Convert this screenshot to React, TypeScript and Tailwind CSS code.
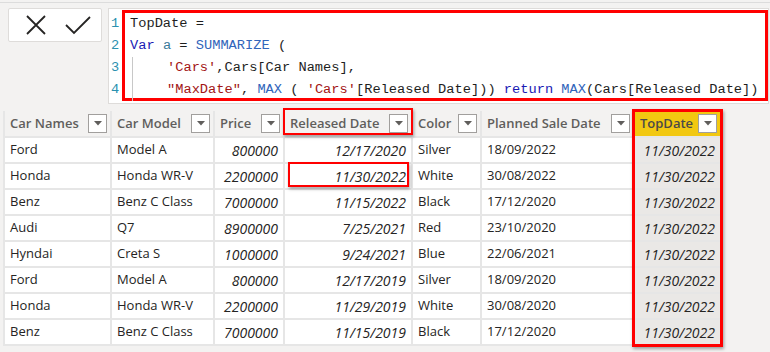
import React from "react";

const cols = [
  { name: "Car Names", w: "w-[107px]" },
  { name: "Car Model", w: "w-[103px]" },
  { name: "Price", w: "w-[70px]" },
  { name: "Released Date", w: "w-[128px]" },
  { name: "Color", w: "w-[69px]" },
  { name: "Planned Sale Date", w: "w-[153px]" },
  { name: "TopDate", w: "w-[87px]" },
];

const rows = [
  ["Ford", "Model A", "800000", "12/17/2020", "Silver", "18/09/2022"],
  ["Honda", "Honda WR-V", "2200000", "11/30/2022", "White", "30/08/2022"],
  ["Benz", "Benz C Class", "7000000", "11/15/2022", "Black", "17/12/2020"],
  ["Audi", "Q7", "8900000", "7/25/2021", "Red", "23/10/2020"],
  ["Hyndai", "Creta S", "1000000", "9/24/2021", "Blue", "22/06/2021"],
  ["Ford", "Model A", "800000", "12/17/2019", "Silver", "18/09/2020"],
  ["Honda", "Honda WR-V", "2200000", "11/29/2019", "White", "30/08/2020"],
  ["Benz", "Benz C Class", "7000000", "11/15/2019", "Black", "17/12/2020"],
];

function Drop() {
  return (
    <div className="w-[19px] h-[19px] bg-white border border-[#a19f9d] flex items-center justify-center shrink-0">
      <svg width="8" height="5" viewBox="0 0 8 5">
        <path d="M0 0 L8 0 L4 4.5 Z" fill="#605e5c" />
      </svg>
    </div>
  );
}

export default function App() {
  const font = { fontFamily: "'Open Sans', 'Noto Sans', sans-serif" };
  const mono = { fontFamily: "'Liberation Mono', 'DejaVu Sans Mono', monospace" };
  return (
    <div className="w-[770px] h-[352px] bg-[#f3f2f1] overflow-hidden relative" style={font}>
      <div className="h-[3px] border-b border-[#dcdcdc]" />
      <div className="flex pt-[5px]">
        <div className="ml-[8px] w-[94px] h-[34px] bg-white border border-[#dedcda] rounded-[2px] flex items-center">
          <svg width="22" height="20" viewBox="0 0 22 20" className="ml-[16px]">
            <path d="M2 1 L20 19 M20 1 L2 19" stroke="#252423" strokeWidth="1.8" fill="none" />
          </svg>
          <svg width="26" height="20" viewBox="0 0 26 20" className="ml-[18px]">
            <path d="M1 10 L9 18 L25 2" stroke="#252423" strokeWidth="1.8" fill="none" />
          </svg>
        </div>
        <div className="ml-[6px] w-[661px] h-[96px] bg-white border border-[#dedcda] flex">
          <div
            className="w-[13px] pl-[2px] pt-[4px] text-[13.7px] leading-[22px] text-[#2b91af]"
            style={mono}
          >
            <div>1</div>
            <div>2</div>
            <div>3</div>
            <div>4</div>
          </div>
          <div
            className="mt-[1px] w-[646px] h-[91px] border-[3px] border-[#ff0000] pl-[5px] text-[13.7px] leading-[22px] text-[#1e1e1e] whitespace-pre"
            style={mono}
          >
            <div>TopDate =</div>
            <div>
              <span className="text-[#1a1ab4]">Var</span> <span className="text-[#3b7a9a]">a</span> ={" "}
              <span className="text-[#3165bb]">SUMMARIZE</span> (
            </div>
            <div className="ml-[2px] border-l border-[#c8c8c8] pl-[34px]">
              <div>
                <span className="text-[#a31515]">'Cars'</span>,Cars[Car Names],
              </div>
              <div>
                <span className="text-[#a31515]">"MaxDate"</span>, <span className="text-[#3165bb]">MAX</span> ({" "}
                <span className="text-[#a31515]">'Cars'</span>[Released Date])){" "}
                <span className="text-[#1a1ab4]">return</span> <span className="text-[#3165bb]">MAX</span>(Cars[Released Date])
              </div>
            </div>
          </div>
        </div>
      </div>

      <div className="relative mt-[7px] ml-[3px] w-[719px]">
        <div className="flex border-l-2 border-[#e6e6e6]">
          {cols.map((c, i) => (
            <div
              key={c.name}
              className={`${c.w} h-[27px] border-b-2 border-r-2 border-[#e6e6e6] flex items-center justify-between pl-[5px] pr-[3px] text-[13px] font-semibold ${
                i === 6 ? "bg-[#f2c811] text-[#4b4a48]" : "bg-[#f3f2f1] text-[#605e5c]"
              }`}
            >
              <span>{c.name}</span>
              <Drop />
            </div>
          ))}
        </div>
        {rows.map((r, ri) => (
          <div key={ri} className="flex border-l-2 border-[#e6e6e6] text-[13px] text-[#252423]">
            {cols.map((c, i) => {
              const right = i === 2 || i === 3 || i === 6;
              const val = i === 6 ? "11/30/2022" : r[i];
              return (
                <div
                  key={i}
                  className={`${c.w} h-[26px] border-b-2 border-r-2 border-[#e6e6e6] flex items-center px-[5px] ${
                    right ? "justify-end italic text-[14px]" : ""
                  } ${i === 6 ? "bg-[#eae8e6]" : "bg-white"}`}
                >
                  {val}
                </div>
              );
            })}
          </div>
        ))}
        <div className="absolute left-[280px] top-[-3px] w-[130px] h-[27px] border-2 border-[#ff0000] shadow-[1px_2px_3px_rgba(0,0,0,0.35)]" />
        <div className="absolute left-[285px] top-[51px] w-[121px] h-[25px] border-2 border-[#ff0000] shadow-[1px_2px_3px_rgba(0,0,0,0.35)]" />
        <div className="absolute left-[629px] top-[-2px] w-[91px] h-[238px] border-[3px] border-[#ff0000] shadow-[1px_2px_3px_rgba(0,0,0,0.35)]" />
      </div>
    </div>
  );
}
